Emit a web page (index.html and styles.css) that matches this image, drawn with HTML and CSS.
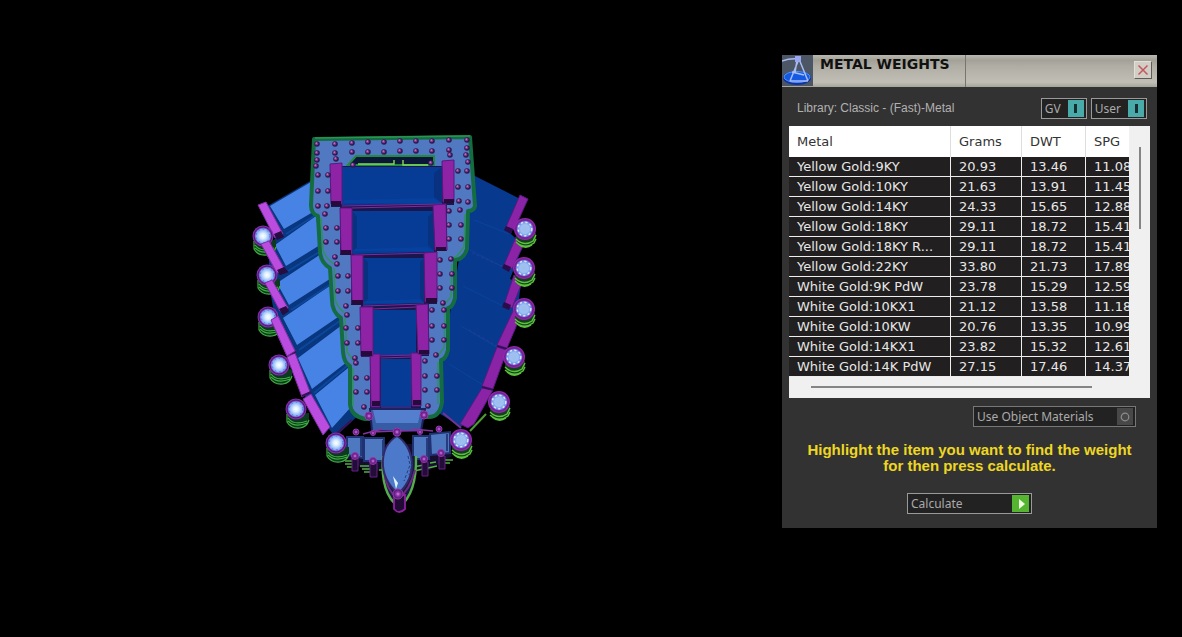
FILE: index.html
```html
<!DOCTYPE html>
<html lang="en">
<head>
<meta charset="utf-8">
<title>Metal Weights</title>
<link rel="stylesheet" href="styles.css">
</head>
<body>
<main class="workspace">
  <section class="viewport" aria-label="Model view">
    <svg class="model" viewBox="241 120 300 410" width="300" height="410" role="img" aria-label="Ring model">
      <defs>
        <radialGradient id="bead"><stop offset="0" stop-color="#d884e8"/><stop offset=".4" stop-color="#8f35a8"/><stop offset="1" stop-color="#3d1560"/></radialGradient>
        <radialGradient id="shineLeft"><stop offset="0" stop-color="#fff"/><stop offset=".35" stop-color="#dceeff"/><stop offset="1" stop-color="#6e9cf2"/></radialGradient>
        <radialGradient id="shineRight"><stop offset="0" stop-color="#9dbfe8"/><stop offset=".55" stop-color="#9fc0f4"/><stop offset="1" stop-color="#6384dd"/></radialGradient>
        <marker id="dot" markerUnits="userSpaceOnUse" markerWidth="7" markerHeight="7" refX="3.5" refY="3.5"><circle cx="3.5" cy="3.5" r="2.8" fill="#2c1b55"/><circle cx="3.1" cy="3.1" r="1.7" fill="#8c3a8e"/><circle cx="2.8" cy="2.6" r=".7" fill="#d79adf"/></marker>
        <g id="gemL">
          <path d="M-8 6v7q4 7 12 6 7-1 9-7V4Z" fill="#0c3a1e"/>
          <path d="M-9 5v8q4 7 13 6 7-1 9-8M-8 9q6 8 19 3M-8 12q7 7 19 2" fill="none" stroke="#3fae40" stroke-width="1.2"/>
          <circle r="10.5" fill="#8331ad"/><circle r="9" fill="none" stroke="#4f1878" stroke-width="1"/><circle r="7.8" fill="url(#shineLeft)"/><circle r="6.8" fill="none" stroke="#4f78d8" stroke-width="1" stroke-dasharray="1.5 3"/>
        </g>
        <g id="gemR">
          <path d="M-9 7q0 9 8 11 8 0 12-8V4Z" fill="#14401e"/>
          <path d="M-9 10q8 8 17 2l3-6M-9 13q9 8 18 1l2-4M-7 15q7 6 14 1" fill="none" stroke="#5cc23c" stroke-width="1.4"/>
          <circle r="11" fill="#9029ac"/><circle r="9.3" fill="none" stroke="#65208c" stroke-width="1"/><circle r="8" fill="url(#shineRight)"/><circle r="6.8" fill="none" stroke="#dceaff" stroke-width="1.4" stroke-dasharray="2.2 2.4"/>
        </g>
      </defs>

      <path d="M264 208 312 180 354 365 362 412 335 437 301 391 276 323 268 280 270 244 278 236Z" fill="#08367f"/>
      <path d="M270 206 311 182 313 212 284 229ZM275 245 316 216 320 245 286 266ZM277 283 321 254 333 277 289 305ZM283 318 335 282 341 315 297 345ZM298 358 342 325 347 362 312 389ZM315 395 348 368 351 407 332 428Z" fill="#4782e5"/>
      <path d="M286 234 314 216M288 271 321 251M291 310 333 283M299 350 341 320M314 393 347 366" stroke="#0b479a" stroke-width="2"/>
      <path d="M258 205 266 202 283 234 275 238ZM261 244 269 241 285 270 277 273ZM265 283 272 280 288 308 280 311ZM271 320 278 316 295 351 287 356ZM287 357 295 353 310 392 302 397ZM303 399 311 394 330 427 323 435Z" fill="#ba4de0" stroke="#7f2fa3"/>
      <path d="M274 234 281 231 284 237 277 240ZM277 270 284 267 288 272 280 275ZM279 309 286 306 289 311 283 315Z" fill="#280d43"/>
      <path d="M286 355 296 352M302 396 311 392M336 434 352 420" stroke="#3b1259" stroke-width="2"/>

      <path d="M473 175 524 201 511 234 523 245 510 279 521 283 517 315 502 362 488 397 461 427 434 410Z" fill="#07398f"/>
      <path d="M474 220 509 234M470 250 511 271M463 286 509 309M461 326 498 348M449 364 488 388" stroke="#0a449a" fill="none"/>
      <path d="M472 253 508 269M469 330 497 346" stroke="#3f389d" stroke-width=".6" stroke-dasharray="3 2"/>
      <path d="M520 195 528 199 514 230 506 227ZM516 237 525 242 512 269 504 265ZM514 275 523 280 512 308 504 305ZM513 311 521 315 507 348 497 345ZM497 347 507 350 493 389 482 386ZM482 388 493 390 474 424 468 428 460 424Z" fill="#8a23a6" stroke="#571a80"/>
      <path d="M506 226 513 229 511 234 504 230ZM504 264 511 267 509 272 502 268ZM504 302 511 305 509 310 502 307Z" fill="#290c49"/><path d="M497 346 507 349M482 387 493 390" stroke="#350d52" stroke-width="1.5"/>
      <path d="M443 413 461 428" stroke="#76328f" stroke-width="2"/><path d="M470 431 486 414" stroke="#4c9e35" stroke-width="2"/>

      <path d="M314 139 470 137 475 206Q474 211 468 211L467 249Q464 259 455 260L455 298Q453 307 448 308L448 350Q446 359 441 360L442 402Q440 418 427 417L365 419Q351 416 350 404L350 366Q344 363 343 352L341 318Q332 312 332 300L330 268Q321 263 320 252L318 216Q311 214 311 205Z" fill="#5079c2" stroke="#136d41" stroke-width="4" stroke-linejoin="round"/>
      <path d="M315 138 470 136M321 218 323 250Q326 259 334 264M334 268 335 299Q338 309 345 313M345 318 347 352 354 361M353 368V406M465 214 464 247 457 256 449 260M452 264 451 297 442 307M445 312 444 348 437 357M438 362V404" fill="none" stroke="#2b9453" stroke-width="1.4"/>
      <path d="M348 165 356 156H434V165Z" fill="#0a1737" stroke="#238b41" stroke-width="2"/><path d="M358 164H394V160M403 160V165H428" fill="none" stroke="#83d95b" stroke-width="1.4"/>
      <path d="M331 166H454V205H447V251H437V304H429V356H421V409H370V357H361V305H351V255H340V207H331Z" fill="#1a164e"/>
      <path d="M342 167H442V204L342 205ZM352 211H434V252L352 254ZM363 258H424V303L363 305ZM373 310H416V355H373ZM381 359H411V407H381Z" fill="#063b96"/>
      <path d="M442 167V203L434 197V173ZM434 211V251L428 245V217ZM352 211V253L357 247V217ZM363 258V304L368 299V262ZM424 258V303L420 298V262Z" fill="#08327f"/>
      <path d="M345 200 434 198 441 203H342ZM356 249 427 247 434 251H352ZM366 301 420 299 424 303H363Z" fill="#07419f"/>
      <path d="M342 206 442 204M352 208 434 206M354 255 434 253M363 306 424 304M373 309 416 307M373 356 416 355M381 358 411 357M381 408H411" stroke="#84289a" stroke-width="1"/>
      <path d="M330 164 342 163V204H331ZM442 161 454 160V202H443ZM340 208H352V254H341ZM433 205 446 204 447 250H435ZM351 255H363V304H352ZM424 253 437 252V302H425ZM360 307H373V356H361ZM416 305 428 304 429 354H418ZM370 354H380V407H371ZM411 353H421V406H412Z" fill="#8e23a6" stroke="#5a187e"/>
      <path d="M331 201H341V206H331ZM444 199H454V203H444ZM341 250H351V255H341ZM436 247H446V251H436ZM352 300H363V305H352ZM426 298H437V303H426ZM361 351H372V356H361ZM419 350H429V354H419ZM372 401H380V406H372ZM413 400H421V405H413Z" fill="#240b3c"/>

      <path fill="none" marker-start="url(#dot)" marker-mid="url(#dot)" marker-end="url(#dot)" d="M317 144 335 144 352 143 368 142 384 142 400 141 416 141 432 141 449 140 467 140 467 148 449 150 432 151 416 151 400 151 384 152 368 152 352 152 335 153 317 153 317 160 316 166 336 159 353 165 431 163 450 155 466 155 468 162M318 175 328 175 328 191 318 191 318 206 327 206 325 214 326 228 337 228 337 242 326 242 335 257 337 264 338 276 348 276 348 291 338 291 346 306 347 315 346 328 358 328 358 343 347 343 355 358 356 363 356 378 367 378 367 392 356 392 364 407M458 171 467 171 468 187 458 187 459 201 468 202 460 210 449 211 449 225 461 225 461 239 449 239 440 260 451 259 440 274 452 274 452 288 440 288 443 303 432 310 444 310 432 326 444 326 444 340 432 340 436 355 425 361 425 376 437 376 437 390 425 390 428 406"/>

      <path d="M346 458 354 444H445L452 456 430 470 366 471Z" fill="#160d30"/>
      <path d="M370 409H425L421 431H372Z" fill="#375ca6" stroke="#1c235f" stroke-width="2"/><path d="M373 410H421L418 423H376Z" fill="#547fce"/><path d="M371 432 421 430M363 434 382 429M413 429 433 431" stroke="#84339d" stroke-width="1.5"/>
      <path d="M347 437H363V458L347 455ZM364 438H384V461H364ZM413 436H429V459H413ZM430 434 450 432 450 453 431 455Z" fill="#4e79c1" stroke="#203272" stroke-width="2"/><path d="M361 438V456M383 440V458M427 438V457M447 434V451" stroke="#263d7e" stroke-width="2"/>
      <path d="M345 461H352M345 464H352M347 467H354M360 466H369M362 469H370M364 472H372M379 470H386M413 467 424 465M414 471 437 466M430 463 436 462M444 460H453M444 463H450" stroke="#50b043" stroke-width="1.4" fill="none"/>
      <path d="M383 456Q380 494 399 507Q417 494 416 456" fill="#171944" stroke="#55ae4a" stroke-width="2.4"/><path d="M384 471Q386 490 398 499Q410 490 415 470" fill="none" stroke="#702886" stroke-width="2"/>
      <path d="M397 436C380 446 376 474 398 494 420 474 413 446 397 436Z" fill="#4d79cb" stroke="#342968" stroke-width="2"/><path d="M403 442 408 448M410 454 412 464 409 475M408 456 410 465 404 481" stroke="#233d79" stroke-dasharray="3 2" fill="none"/><path d="M393 476 398 483 396 489Z" fill="#e0f6ff"/>
      <path d="M394 495H405V509Q399 515 394 509Z" fill="#210b35" stroke="#8b219f" stroke-width="1.8"/>
      <path d="M352 458H358V471H352ZM370 463H377V477H370ZM422 462H428V476H422ZM439 456H445V469H439Z" fill="#220c38" stroke="#662084"/>
      <g fill="url(#bead)" stroke="#9c36b2" stroke-width="1"><circle cx="369" cy="416" r="4"/><circle cx="424" cy="415" r="4"/><circle cx="397" cy="432" r="4"/><circle cx="356" cy="432" r="3"/><circle cx="373" cy="433" r="2.5"/><circle cx="420" cy="432" r="2.5"/><circle cx="439" cy="429" r="3"/><circle cx="355" cy="456" r="3.5"/><circle cx="373" cy="461" r="3.5"/><circle cx="424" cy="459" r="3.5"/><circle cx="441" cy="453" r="3.5"/><circle cx="398" cy="494" r="5"/></g>

      <use href="#gemL" x="263" y="236"/><use href="#gemL" x="267" y="275"/><use href="#gemL" x="268" y="317"/><use href="#gemL" x="279" y="365"/><use href="#gemL" x="296" y="409"/><use href="#gemL" x="336" y="443"/>
      <use href="#gemR" x="525" y="229"/><use href="#gemR" x="524" y="268"/><use href="#gemR" x="524" y="309"/><use href="#gemR" x="514" y="357"/><use href="#gemR" x="499" y="402"/><use href="#gemR" x="461" y="440"/>
      <path d="M261 244 269 241 285 270 277 273ZM265 283 272 280 288 308 280 311ZM271 320 278 316 295 351 287 356Z" fill="#ba4de0" stroke="#7f2fa3"/><path d="M277 270 284 267 288 272 280 275ZM279 309 286 306 289 311 283 315Z" fill="#280d43"/>
    </svg>
  </section>

  <section class="panel" aria-labelledby="title">
    <header class="titlebar">
      <svg class="logo" viewBox="0 0 31 31" width="31" height="31" aria-hidden="true"><rect width="31" height="31" fill="#4d5665"/><ellipse cx="15" cy="23" rx="14" ry="7" fill="#12339b"/><ellipse cx="15" cy="22" rx="13" ry="5.5" fill="#1559e0" stroke="#4d94ff"/><path d="M0 6Q8 3 17 4L8 26M17 4 26 26M15 5 13 18M10 17 22 20M8 26 26 26" fill="none" stroke="#a8bcf6" stroke-width="1.5"/><path d="M13 1h6v6h-6z" fill="#98a7ef"/></svg>
      <h1 class="title" id="title">METAL WEIGHTS</h1>
      <button class="close" type="button" aria-label="Close"><svg viewBox="0 0 12 12" width="12" height="12"><path d="M1.5 1.5 10.5 10.5M10.5 1.5 1.5 10.5" stroke="#c4575d" stroke-width="1.5"/></svg></button>
    </header>
    <div class="content">
      <div class="toolbar">
        <p class="library">Library: Classic - (Fast)-Metal</p>
        <button class="control toggle" type="button" aria-pressed="true"><span>GV</span><span class="switch"></span></button>
        <button class="control toggle" type="button" aria-pressed="true"><span>User</span><span class="switch"></span></button>
      </div>
      <div class="list">
        <div class="clip">
          <table class="weights">
            <colgroup><col class="metal"><col class="grams"><col class="dwt"><col class="spg"></colgroup>
            <thead><tr><th>Metal</th><th>Grams</th><th>DWT</th><th>SPG</th></tr></thead>
            <tbody>
              <tr><td>Yellow Gold:9KY</td><td>20.93</td><td>13.46</td><td>11.08</td></tr>
              <tr><td>Yellow Gold:10KY</td><td>21.63</td><td>13.91</td><td>11.45</td></tr>
              <tr><td>Yellow Gold:14KY</td><td>24.33</td><td>15.65</td><td>12.88</td></tr>
              <tr><td>Yellow Gold:18KY</td><td>29.11</td><td>18.72</td><td>15.41</td></tr>
              <tr><td>Yellow Gold:18KY R...</td><td>29.11</td><td>18.72</td><td>15.41</td></tr>
              <tr><td>Yellow Gold:22KY</td><td>33.80</td><td>21.73</td><td>17.89</td></tr>
              <tr><td>White Gold:9K PdW</td><td>23.78</td><td>15.29</td><td>12.59</td></tr>
              <tr><td>White Gold:10KX1</td><td>21.12</td><td>13.58</td><td>11.18</td></tr>
              <tr><td>White Gold:10KW</td><td>20.76</td><td>13.35</td><td>10.99</td></tr>
              <tr><td>White Gold:14KX1</td><td>23.82</td><td>15.32</td><td>12.61</td></tr>
              <tr><td>White Gold:14K PdW</td><td>27.15</td><td>17.46</td><td>14.37</td></tr>
            </tbody>
          </table>
        </div>
        <div class="track-y"><div class="thumb-y"></div></div>
        <div class="track-x"><div class="thumb-x"></div></div>
      </div>
      <button class="control materials" type="button"><span>Use Object Materials</span><span class="radio"><svg viewBox="0 0 10 10" width="10" height="10"><circle cx="5" cy="5" r="3.8" fill="none" stroke="#8d8d8d" stroke-width="1.2"/></svg></span></button>
      <p class="hint">Highlight the item you want to find the weight for then press calculate.</p>
      <button class="control calculate" type="button"><span>Calculate</span><span class="go"><svg viewBox="0 0 16 16" width="16" height="16"><path d="M6 3 12 8 6 13Z" fill="#efffdf"/></svg></span></button>
    </div>
  </section>
</main>
</body>
</html>
```
FILE: styles.css
```css
* { box-sizing: border-box; }
body { margin: 0; min-height: 100vh; background: #000; font-family: "DejaVu Sans", sans-serif; }
h1, p { margin: 0; }
button { padding: 0; border-radius: 0; font: inherit; }
svg { display: block; }
.workspace { display: flex; align-items: flex-start; min-height: 100vh; padding-right: 25px; }
.viewport { flex: 1; display: flex; justify-content: center; padding-top: 120px; }
.panel { flex: 0 0 375px; margin-top: 55px; background: #333232; }
.titlebar { display: flex; align-items: flex-start; height: 32px; background: linear-gradient(#b9b8ae, #a3a197 16%, #b0aea4 35%, #c1bfb5 85%, #a5a49b); }
.title { align-self: stretch; width: 153px; padding-left: 7px; border-right: 1px solid #77766e; color: #111; font-size: 14px; line-height: 18px; font-weight: 700; white-space: nowrap; }
.close { display: grid; place-items: center; width: 18px; height: 18px; margin: 6px 5px 0 auto; background: #d0cec5; border: 1px solid; border-color: #e2e0d8 #5d5c58 #5d5c58 #e2e0d8; }
.content { display: flex; flex-direction: column; padding: 11px 7px 14px; }
.toolbar { display: flex; align-items: center; gap: 4px; padding: 0 3px 0 8px; }
.library { flex: 1; padding-bottom: 2px; color: #b1b1b1; font: 12px/18px "Liberation Sans", sans-serif; }
.control { display: flex; align-items: center; justify-content: space-between; height: 21px; padding: 0 2px 0 3px; border: 1px solid #999; background: #222; color: #aaa; font: 12px/18px "Noto Sans", sans-serif; }
.toggle { gap: 7px; }
.switch { display: grid; place-items: center; width: 16px; height: 17px; background: #48aaa9; }
.switch::before { content: ""; width: 3px; height: 9px; background: #172d30; }
.list { display: grid; grid-template-columns: 1fr 21px; margin-top: 7px; background: #f0f0f0; }
.clip { min-width: 0; overflow: hidden; }
.weights { width: 368px; table-layout: fixed; border-collapse: separate; border-spacing: 0; color: #e7e7e7; font-size: 13px; line-height: 18px; }
.metal { width: 162px; }
.grams { width: 71px; }
.dwt { width: 64px; }
.spg { width: 71px; }
.weights th { height: 31px; padding: 0 0 0 8px; border-right: 1px solid #ddd; background: #fff; color: #333; font-weight: 400; text-align: left; }
.weights td { height: 20px; padding: 0 0 0 8px; border-right: 1px solid #eee; border-bottom: 1px solid #eee; background: #211f1f; white-space: nowrap; }
.track-y { padding: 21px 9px 0 10px; }
.thumb-y { height: 82px; background: #858585; }
.track-x { grid-column: 1 / -1; height: 21px; padding: 9px 58px 0 22px; }
.thumb-x { height: 2px; background: #858585; }
.materials { align-self: flex-end; width: 163px; margin: 8px 14px 0 0; border-color: #777; }
.radio { display: grid; place-items: center; width: 16px; height: 17px; background: #484848; }
.hint { max-width: 340px; margin: 15px auto 0; color: #edd722; font: 700 15px/16px "Liberation Sans", sans-serif; text-align: center; }
.calculate { align-self: center; width: 125px; margin: 19px 0 0; }
.go { display: grid; place-items: center; width: 17px; height: 17px; background: #55b531; }
```
